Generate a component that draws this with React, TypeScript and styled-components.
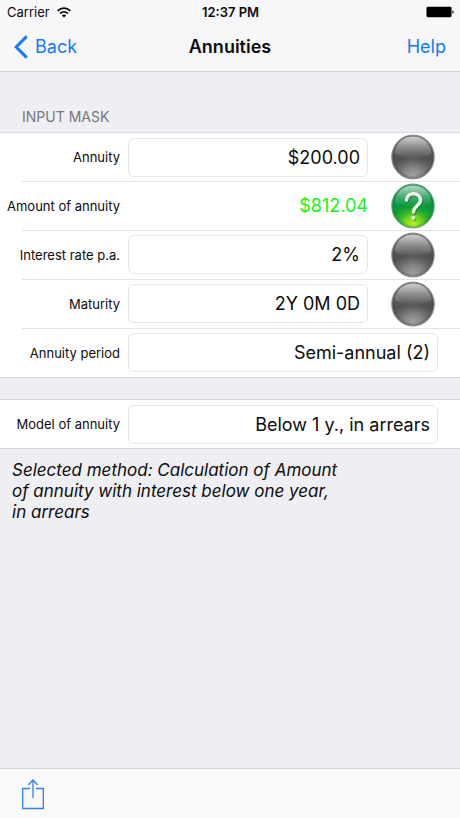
import React, { useId, useState } from "react";
import styled, { createGlobalStyle, css } from "styled-components";

const BLUE = "#127bf5";
const LINE = "#d3d3d7";

const GlobalStyle = createGlobalStyle`
  *, *::before, *::after { box-sizing: border-box; }
  body {
    margin: 0;
    background: #eeeef3;
    color: #0c0c0c;
    font-family: Inter, "Liberation Sans", sans-serif;
  }
  button, input, select { font: inherit; color: inherit; }
`;

const Screen = styled.div`
  display: flex;
  flex-direction: column;
  min-height: 100vh;
`;

const Header = styled.header`
  background: #f7f7f9;
  border-bottom: 1px solid ${LINE};
`;

const StatusBar = styled.div`
  display: grid;
  grid-template-columns: 1fr auto 1fr;
  align-items: center;
  height: 24px;
  padding: 0 6px 0 7px;
  font-size: 13px;
`;

const Carrier = styled.div`
  display: flex;
  align-items: center;
  gap: 7px;
`;

const Clock = styled.div`
  font-weight: 600;
`;

const BatterySlot = styled.div`
  display: flex;
  justify-content: flex-end;
`;

const NavBar = styled.nav`
  display: grid;
  grid-template-columns: 1fr auto 1fr;
  align-items: center;
  height: 47px;
  padding: 0 14px 2px;
`;

const Title = styled.h1`
  margin: 0;
  font-size: 18px;
  font-weight: 600;
`;

const NavButton = styled.button<{ $end?: boolean }>`
  display: flex;
  align-items: center;
  gap: 7px;
  justify-self: ${(p) => (p.$end ? "end" : "start")};
  padding: 0;
  border: 0;
  background: none;
  color: ${BLUE};
  font-size: 18px;
  cursor: pointer;
`;

const Content = styled.main`
  flex: 1;
`;

const SectionTitle = styled.h2`
  margin: 0;
  padding: 36px 22px 6px;
  color: #77777c;
  font-size: 14px;
  font-weight: 400;
  line-height: 18px;
`;

const Group = styled.section<{ $spaced?: boolean }>`
  margin-top: ${(p) => (p.$spaced ? 21 : 0)}px;
  background: #fff;
  border-top: 1px solid #dadade;
  border-bottom: 1px solid #dadade;
`;

const Row = styled.div`
  display: grid;
  grid-template-columns: 120px 1fr auto;
  align-items: center;
  height: 48px;
  padding-right: 22px;

  & + & {
    height: 49px;
    background: linear-gradient(#e3e3e6, #e3e3e6) 22px 0 / 100% 1px no-repeat;
  }
`;

const Label = styled.label`
  font-size: 13px;
  text-align: right;
  white-space: nowrap;
`;

const fieldStyle = css`
  width: 100%;
  min-width: 0;
  height: 39px;
  padding: 0 7px;
  border: 1px solid #e6e6e8;
  border-radius: 6px;
  background: #fff;
  font-size: 18px;
`;

const FieldSlot = styled.div`
  display: flex;
  min-width: 0;
  margin-left: 8px;
`;

const TextField = styled.input`
  ${fieldStyle}
  text-align: right;
`;

const Picker = styled.select`
  ${fieldStyle}
  appearance: none;
  text-align: right;
  text-align-last: right;
`;

const Result = styled.output`
  width: 100%;
  color: #14f514;
  font-size: 18px;
  text-align: right;
`;

const OrbButton = styled.button`
  display: block;
  margin: 0 3px 0 23px;
  padding: 0;
  border: 0;
  border-radius: 50%;
  background: none;
  line-height: 0;
  cursor: pointer;
`;

const Note = styled.p`
  max-width: 356px;
  margin: 0;
  padding: 11px 12px;
  font-size: 17px;
  font-style: italic;
  line-height: 21px;
`;

const Toolbar = styled.footer`
  display: flex;
  align-items: center;
  height: 50px;
  padding: 0 22px;
  background: #f9f9fa;
  border-top: 1px solid ${LINE};
`;

const ToolButton = styled.button`
  padding: 0;
  border: 0;
  background: none;
  color: #2b83e6;
  line-height: 0;
  cursor: pointer;
`;

function WifiIcon() {
  return (
    <svg width="14" height="11" viewBox="0 0 13 10" fill="none" stroke="#000" strokeWidth="1.6" aria-hidden="true">
      <path d="M0.6 3.5C4 0.2 9 0.2 12.4 3.5" />
      <path d="M2.8 5.9C4.9 3.9 8.1 3.9 10.2 5.9" />
      <path d="M6.5 9.6L4.5 7.6C5.6 6.5 7.4 6.5 8.5 7.6Z" fill="#000" stroke="none" />
    </svg>
  );
}

function BatteryIcon() {
  return (
    <svg width="28" height="12" viewBox="0 0 28 12" aria-hidden="true">
      <rect x="0.5" y="0.8" width="25" height="10.4" rx="1.4" fill="#000" />
      <path d="M26.4 4.2C28 4.6 28 7.4 26.4 7.8Z" fill="#000" />
    </svg>
  );
}

function BackIcon() {
  return (
    <svg width="14" height="24" viewBox="0 0 14 24" fill="none" stroke="currentColor" strokeWidth="3" aria-hidden="true">
      <path d="M12.7 1.4L2.2 12L12.7 22.6" />
    </svg>
  );
}

function ShareIcon() {
  return (
    <svg width="22" height="32" viewBox="0 0 22 32" fill="none" stroke="currentColor" strokeWidth="1.3" aria-hidden="true">
      <path d="M8 10.5H0.7V30.5H21.3V10.5H14" />
      <path d="M11 20V2.2M6.3 7L11 2L15.7 7" />
    </svg>
  );
}

function Orb({ active }: { active?: boolean }) {
  const id = useId();
  const body = `${id}-body`;
  const glow = `${id}-glow`;
  const gloss = `${id}-gloss`;
  const edge = `${id}-edge`;
  return (
    <svg width="44" height="46" viewBox="0 0 44 46" aria-hidden="true">
      <defs>
        <linearGradient id={body} x1="0" y1="0" x2="0" y2="1">
          <stop offset="0" stopColor={active ? "#2c9a5e" : "#7a7a7a"} />
          <stop offset="0.35" stopColor={active ? "#0c9244" : "#626262"} />
          <stop offset="0.55" stopColor={active ? "#0a9a38" : "#505050"} />
          <stop offset="1" stopColor={active ? "#34b82a" : "#787878"} />
        </linearGradient>
        <radialGradient id={glow} cx="0.5" cy="0.96" r="0.52">
          <stop offset="0" stopColor={active ? "#c8f81e" : "#a6a6a6"} />
          <stop offset="0.45" stopColor={active ? "#7ede20" : "#8c8c8c"} stopOpacity="0.8" />
          <stop offset="1" stopColor={active ? "#18a82e" : "#6a6a6a"} stopOpacity="0" />
        </radialGradient>
        <linearGradient id={gloss} x1="0" y1="0" x2="0" y2="1">
          <stop offset="0" stopColor="#fff" stopOpacity="0.65" />
          <stop offset="0.5" stopColor="#fff" stopOpacity="0.25" />
          <stop offset="1" stopColor="#fff" stopOpacity="0.02" />
        </linearGradient>
        <radialGradient id={edge} cx="0.5" cy="0.5" r="0.5">
          <stop offset="0.84" stopColor={active ? "#06622c" : "#333"} stopOpacity="0" />
          <stop offset="1" stopColor={active ? "#06622c" : "#333"} stopOpacity="0.4" />
        </radialGradient>
      </defs>
      <ellipse cx="22" cy="23" rx="21.2" ry="21.8" fill={`url(#${body})`} />
      <ellipse cx="22" cy="23" rx="21.2" ry="21.8" fill={`url(#${glow})`} />
      <ellipse cx="22" cy="23" rx="21.2" ry="21.8" fill={`url(#${edge})`} />
      <path d="M3.5 19C4.5 8.500 12.5 2.400 22 2.400S39.500 8.500 40.500 19C34 22.500 28 23.500 22 23.500S10 22.500 3.500 19Z" fill={`url(#${gloss})`} />
      <ellipse cx="22" cy="23" rx="21.2" ry="21.8" fill="none" stroke={active ? "#5fa87a" : "#8c8c8c"} strokeWidth="1.2" />
      {active && (
        <g fill="none" strokeLinecap="round" strokeLinejoin="round">
          <g stroke="#0b6b2c" strokeOpacity="0.6" strokeWidth="3.8" transform="translate(1 1)">
            <path d="M15.5 17C16 8.5 29.5 8.5 29.5 17C29.5 22.500 22.500 23 22.500 29" />
            <path d="M22.3 34.8V35" />
          </g>
          <path d="M15.5 17C16 8.5 29.5 8.5 29.5 17C29.5 22.500 22.500 23 22.500 29" stroke="#eef3ea" strokeWidth="3.5" />
          <path d="M22.3 34.8V35" stroke="#eef3ea" strokeWidth="4.2" />
        </g>
      )}
    </svg>
  );
}

type InputRowProps = { id: string; label: string; initial: string };

function InputRow({ id, label, initial }: InputRowProps) {
  const [value, setValue] = useState(initial);
  return (
    <Row>
      <Label htmlFor={id}>{label}</Label>
      <FieldSlot>
        <TextField id={id} value={value} onChange={(e) => setValue(e.target.value)} />
      </FieldSlot>
      <OrbButton type="button" aria-label={`Calculate ${label}`}>
        <Orb />
      </OrbButton>
    </Row>
  );
}

function PickerRow({ id, label, option }: { id: string; label: string; option: string }) {
  return (
    <Row>
      <Label htmlFor={id}>{label}</Label>
      <FieldSlot>
        <Picker id={id} defaultValue={option}>
          <option>{option}</option>
        </Picker>
      </FieldSlot>
    </Row>
  );
}

export default function App() {
  return (
    <Screen>
      <GlobalStyle />
      <Header>
        <StatusBar>
          <Carrier>
            Carrier
            <WifiIcon />
          </Carrier>
          <Clock>12:37 PM</Clock>
          <BatterySlot>
            <BatteryIcon />
          </BatterySlot>
        </StatusBar>
        <NavBar>
          <NavButton type="button">
            <BackIcon />
            Back
          </NavButton>
          <Title>Annuities</Title>
          <NavButton type="button" $end>
            Help
          </NavButton>
        </NavBar>
      </Header>
      <Content>
        <SectionTitle>INPUT MASK</SectionTitle>
        <Group>
          <InputRow id="annuity" label="Annuity" initial="$200.00" />
          <Row>
            <Label htmlFor="amount">Amount of annuity</Label>
            <FieldSlot>
              <Result id="amount">$812.04</Result>
            </FieldSlot>
            <OrbButton type="button" aria-label="Calculate Amount of annuity" aria-pressed="true">
              <Orb active />
            </OrbButton>
          </Row>
          <InputRow id="rate" label="Interest rate p.a." initial="2%" />
          <InputRow id="maturity" label="Maturity" initial="2Y 0M 0D" />
          <PickerRow id="period" label="Annuity period" option="Semi-annual (2)" />
        </Group>
        <Group $spaced>
          <PickerRow id="model" label="Model of annuity" option="Below 1 y., in arrears" />
        </Group>
        <Note>Selected method: Calculation of Amount of annuity with interest below one year, in arrears</Note>
      </Content>
      <Toolbar>
        <ToolButton type="button" aria-label="Share">
          <ShareIcon />
        </ToolButton>
      </Toolbar>
    </Screen>
  );
}
